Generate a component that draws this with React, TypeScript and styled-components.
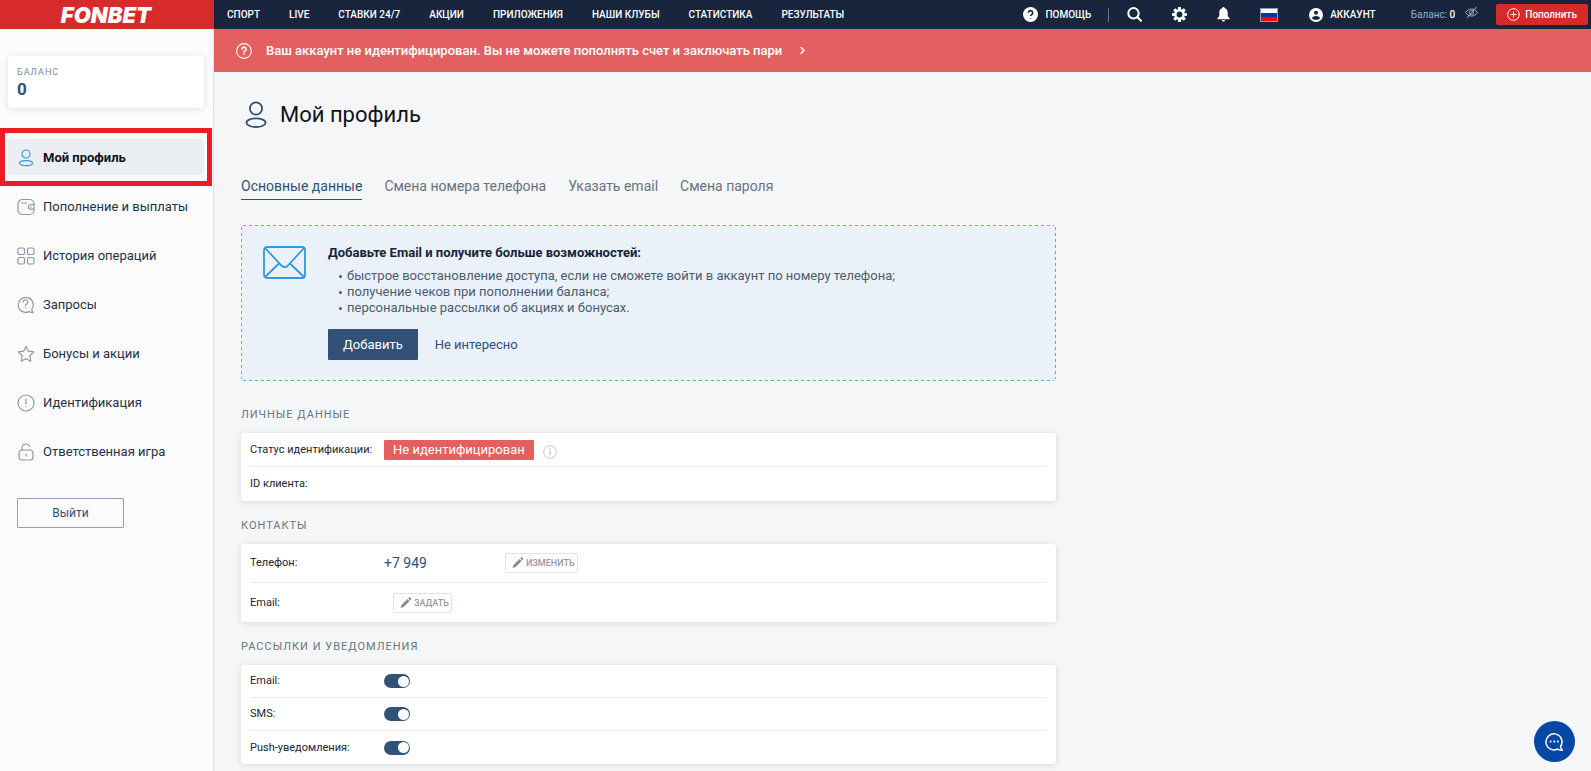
import React from 'react';
import styled, { createGlobalStyle } from 'styled-components';

const c = {
  navy: '#18253d',
  red: '#d62b2a',
  coral: '#e45f60',
  blue: '#315177',
  sky: '#2f9bdb',
  grey: '#8f99a6',
};

const GlobalStyle = createGlobalStyle`
  *, *::before, *::after { box-sizing: border-box; }
  body { margin: 0; background: #f5f6f8; color: #141a24; font-family: Roboto, "Liberation Sans", sans-serif; font-size: 13px; line-height: 16px; }
  button, input { font: inherit; }
  button { cursor: pointer; }
  a { color: inherit; text-decoration: none; }
  h1, h2, h3, p, ul { margin: 0; padding: 0; }
  ul { list-style: none; }
  svg { display: block; flex: none; }
`;

const Page = styled.div`
  display: grid;
  grid-template-columns: 214px minmax(0, 1fr);
  grid-template-rows: 29px 1fr;
  min-height: 100vh;
`;

const Logo = styled.a`
  display: flex;
  align-items: center;
  justify-content: center;
  padding-right: 2px;
  background: ${c.red};
  color: #fff;
  font-family: Inter, sans-serif;
  font-size: 22px;
  font-weight: 900;
  font-style: italic;
`;

const TopBar = styled.header`
  display: flex;
  align-items: center;
  justify-content: space-between;
  padding: 0 3px 0 13px;
  background: ${c.navy};
  color: #fff;
  font-size: 10px;
  font-weight: 500;
  white-space: nowrap;
`;

const TopNav = styled.nav`
  display: flex;
  gap: 29px;
`;

const Tools = styled.div`
  display: flex;
  align-items: center;
`;

const Tool = styled.button<{ $gap: number }>`
  display: flex;
  align-items: center;
  gap: 7px;
  margin-right: ${(p) => p.$gap}px;
  padding: 0;
  border: 0;
  background: none;
  color: #fff;
`;

const Divider = styled.span`
  width: 1px;
  height: 14px;
  margin-right: 18px;
  background: #66748a;
`;

const BalanceNote = styled.span`
  margin-right: 10px;
  color: #93b0cd;
  font-weight: 400;
  b { color: #fff; font-weight: 500; }
`;

const TopUp = styled.button`
  display: flex;
  align-items: center;
  gap: 5px;
  height: 21px;
  padding: 0 11px;
  border: 0;
  border-radius: 2px;
  background: ${c.red};
  color: #fff;
`;

const Sidebar = styled.aside`
  padding: 27px 9px 20px 8px;
  border-right: 1px solid #dfe2e6;
  background: #fbfbfb;
`;

const BalanceCard = styled.section`
  height: 52px;
  margin-bottom: 31px;
  padding: 10px 9px;
  border-radius: 3px;
  background: #fff;
  box-shadow: 0 1px 6px rgba(30, 45, 70, 0.12);
`;

const BalanceLabel = styled.h2`
  color: #7f8a98;
  font-size: 9px;
  line-height: 13px;
  font-weight: 400;
  letter-spacing: 1px;
`;

const BalanceValue = styled.p`
  color: ${c.blue};
  font-size: 17px;
  line-height: 20px;
  font-weight: 700;
`;

const MenuList = styled.ul`
  display: grid;
  gap: 13px;
`;

const MenuItem = styled.li<{ $active?: boolean }>`
  position: relative;
  border-radius: 3px;
  background: ${(p) => (p.$active ? '#ebeff4' : 'none')};
  color: ${(p) => (p.$active ? '#101216' : '#23324a')};
  font-weight: ${(p) => (p.$active ? 700 : 400)};
  a { display: flex; align-items: center; gap: 8px; height: 36px; padding: 2px 0 0 9px; white-space: nowrap; }
  svg { color: ${(p) => (p.$active ? c.sky : c.grey)}; }
`;

const Highlight = styled.span`
  position: absolute;
  inset: -11px -8px;
  border: 5px solid #ed1c24;
  pointer-events: none;
`;

const Logout = styled.button`
  width: 107px;
  height: 30px;
  margin: 29px 0 0 9px;
  border: 1px solid #91a0b6;
  border-radius: 1px;
  background: none;
  color: ${c.blue};
  font-size: 12px;
`;

const Main = styled.main`
  min-width: 0;
`;

const Alert = styled.a`
  display: flex;
  align-items: center;
  gap: 14px;
  height: 43px;
  padding-left: 22px;
  background: ${c.coral};
  color: #fff;
  font-weight: 500;
`;

const Content = styled.div`
  max-width: 842px;
  padding: 27px 0 6px 27px;
`;

const Title = styled.h1`
  display: flex;
  align-items: center;
  gap: 13px;
  height: 32px;
  padding-left: 4px;
  color: #101216;
  font-size: 22px;
  font-weight: 400;
  svg { color: ${c.blue}; }
`;

const Tabs = styled.nav`
  display: flex;
  gap: 22px;
  margin: 45px 0 25px;
`;

const Tab = styled.a<{ $active?: boolean }>`
  height: 24px;
  padding-top: 2px;
  border-bottom: 1px solid ${(p) => (p.$active ? c.blue : 'transparent')};
  color: ${(p) => (p.$active ? c.blue : '#69737f')};
  font-size: 14px;
`;

const dash = (dir: string) => `linear-gradient(to ${dir}, #5aaedb 3px, transparent 3px)`;

const Promo = styled.section`
  display: flex;
  align-items: flex-start;
  gap: 22px;
  height: 156px;
  padding: 20px 22px;
  border-radius: 4px;
  background:
    ${dash('right')} 2px 0 / 6px 1px repeat-x,
    ${dash('right')} 2px 100% / 6px 1px repeat-x,
    ${dash('bottom')} 0 2px / 1px 6px repeat-y,
    ${dash('bottom')} 100% 2px / 1px 6px repeat-y,
    #eaf1f8;
  > svg { margin-top: 1px; color: ${c.sky}; }
`;

const PromoTitle = styled.h2`
  margin-bottom: 7px;
  color: #16243a;
  font-size: 13px;
  line-height: 16px;
  font-weight: 700;
`;

const PromoItem = styled.li`
  display: flex;
  align-items: center;
  gap: 5px;
  padding-left: 11px;
  color: #4b5b70;
  &::before { content: ''; width: 3px; height: 3px; border-radius: 50%; background: currentColor; }
`;

const Actions = styled.div`
  display: flex;
  margin-top: 13px;
`;

const Action = styled.button<{ $primary?: boolean }>`
  height: 31px;
  padding: 0 ${(p) => (p.$primary ? 15 : 17)}px;
  border: 0;
  border-radius: 1px;
  background: ${(p) => (p.$primary ? c.blue : 'none')};
  color: ${(p) => (p.$primary ? '#fff' : c.blue)};
`;

const SectionTitle = styled.h2`
  margin: 17px 0 10px;
  color: #687584;
  font-size: 11px;
  line-height: 16px;
  font-weight: 400;
  letter-spacing: 1px;
`;

const PersonalTitle = styled(SectionTitle)`
  margin-top: 26px;
`;

const Card = styled.section<{ $row: number }>`
  display: grid;
  grid-auto-rows: ${(p) => p.$row}px;
  padding: 0 9px;
  border-radius: 3px;
  background: #fff;
  box-shadow: 0 1px 6px rgba(30, 45, 70, 0.14);
`;

const Row = styled.div`
  display: grid;
  grid-template-columns: 134px 1fr;
  align-items: center;
  color: #20252c;
  &:not(:last-child) { border-bottom: 1px solid #ebedef; }
`;

const RowLabel = styled.label`
  font-size: 11px;
`;

const RowValue = styled.div`
  display: flex;
  align-items: center;
`;

const Status = styled.span`
  margin-right: 9px;
  padding: 2px 9px;
  border-radius: 1px;
  background: ${c.coral};
  color: #fff;
`;

const Phone = styled.span`
  width: 121px;
  color: ${c.blue};
  font-size: 14px;
`;

const Edit = styled.button<{ $indent?: boolean }>`
  display: flex;
  align-items: center;
  gap: 2px;
  height: 20px;
  margin-left: ${(p) => (p.$indent ? 9 : 0)}px;
  padding: 0 2px 0 6px;
  border: 1px solid #e2e3e5;
  border-radius: 2px;
  background: #fff;
  color: #999;
  font-size: 9px;
  font-weight: 500;
`;

const Switch = styled.input`
  appearance: none;
  display: flex;
  align-items: center;
  width: 26px;
  height: 14px;
  margin: 0;
  padding: 1px;
  border-radius: 7px;
  background: #aab4c1;
  &::before { content: ''; width: 11px; height: 11px; border-radius: 50%; background: #fff; }
  &:checked { justify-content: flex-end; background: ${c.blue}; }
`;

const Chat = styled.button`
  position: fixed;
  right: 16px;
  bottom: 9px;
  display: grid;
  place-items: center;
  width: 41px;
  height: 41px;
  padding: 0;
  border: 0;
  border-radius: 50%;
  background: #0547a5;
  color: #fff;
`;

type IconProps = { size?: number; box?: number; sw?: number; children: React.ReactNode };
const Icon = ({ size = 18, box = 18, sw = 1.2, children }: IconProps) => (
  <svg width={size} height={size} viewBox={`0 0 ${box} ${box}`} fill="none" stroke="currentColor" strokeWidth={sw} strokeLinecap="round" strokeLinejoin="round" aria-hidden="true">
    {children}
  </svg>
);

const QuestionMark = () => (
  <>
    <path d="M6.7 7a2.3 2.3 0 1 1 3.4 2c-.8.4-1.1.8-1.1 1.5" />
    <path d="M9 12.5v.1" />
  </>
);

const menu = [
  {
    text: 'Мой профиль',
    active: true,
    icon: (
      <Icon>
        <circle cx="9" cy="5" r="4" />
        <ellipse cx="9" cy="14.2" rx="6.5" ry="2.5" />
      </Icon>
    ),
  },
  {
    text: 'Пополнение и выплаты',
    icon: (
      <Icon>
        <rect x="1" y="1.5" width="16" height="15" rx="4.5" />
        <path d="M4.5 5h5M17 6.5h-3.3a2.3 2.3 0 0 0 0 4.6H17M13.6 8.8h.6" />
      </Icon>
    ),
  },
  {
    text: 'История операций',
    icon: (
      <Icon>
        <rect x="1" y="1" width="6.5" height="6.5" rx="1.6" />
        <rect x="10.5" y="1" width="6.5" height="6.5" rx="1.6" />
        <rect x="1" y="10.5" width="6.5" height="6.5" rx="1.6" />
        <rect x="10.5" y="10.5" width="6.5" height="6.5" rx="1.6" />
      </Icon>
    ),
  },
  {
    text: 'Запросы',
    icon: (
      <Icon>
        <path d="M14.7 13.4A7.5 7.5 0 1 0 12 15.6c1.2.8 2.7 1.2 4.3 1-.9-.8-1.4-1.8-1.6-3.2Z" />
        <g transform="translate(-.6 -.9)"><QuestionMark /></g>
      </Icon>
    ),
  },
  {
    text: 'Бонусы и акции',
    icon: (
      <Icon>
        <path d="m9 1.300 2.300 4.900 5.400.7-3.900 3.800.9 5.500L9 13.600l-4.700 2.600.9-5.500-3.900-3.800 5.400-.7Z" />
      </Icon>
    ),
  },
  {
    text: 'Идентификация',
    icon: (
      <Icon>
        <circle cx="9" cy="9" r="8" />
        <path d="M9 5v4.800M9 12.500v.2" />
      </Icon>
    ),
  },
  {
    text: 'Ответственная игра',
    icon: (
      <Icon>
        <rect x="2" y="7" width="14" height="10" rx="3" />
        <path d="M5 7V5.200C5 2.800 6.700 1 9 1c1.700 0 3.100.9 3.700 2.300M9 11v2" />
      </Icon>
    ),
  },
];

const Pencil = () => (
  <svg width="12" height="12" viewBox="0 0 12 12" fill="#888" aria-hidden="true">
    <path d="M.6 11l.9-3 6-6 2.100 2.100-6 6ZM8.200 1.300l.7-.7c.4-.4.8-.4 1.200 0l.9.9c.4.4.4.800 0 1.200l-.7.700Z" />
  </svg>
);

const teeth = [0, 45, 90, 135, 180, 225, 270, 315];

const App = () => (
  <>
    <GlobalStyle />
    <Page>
      <Logo href="#">FONBET</Logo>
      <TopBar>
        <TopNav>
          {['СПОРТ', 'LIVE', 'СТАВКИ 24/7', 'АКЦИИ', 'ПРИЛОЖЕНИЯ', 'НАШИ КЛУБЫ', 'СТАТИСТИКА', 'РЕЗУЛЬТАТЫ'].map((t) => (
            <a href="#" key={t}>{t}</a>
          ))}
        </TopNav>
        <Tools>
          <Tool $gap={17}>
            <svg width="15" height="15" viewBox="0 0 15 15" aria-hidden="true">
              <circle cx="7.500" cy="7.500" r="7.500" fill="#fff" />
              <path d="M5.300 5.800a2.200 2.200 0 1 1 3.300 1.900c-.8.400-1.100.7-1.100 1.400M7.500 11v.5" fill="none" stroke={c.navy} strokeWidth="1.600" />
            </svg>
            ПОМОЩЬ
          </Tool>
          <Divider />
          <Tool $gap={30} aria-label="Поиск">
            <Icon size={15} box={15} sw={2}><circle cx="6.500" cy="6.300" r="5.200" /><path d="m10.500 10.300 3.500 3.500" /></Icon>
          </Tool>
          <Tool $gap={30} aria-label="Настройки">
            <svg width="15" height="15" viewBox="0 0 15 15" aria-hidden="true">
              {teeth.map((a) => <rect key={a} x="5.900" y="0" width="3.200" height="4" rx=".8" fill="#fff" transform={`rotate(${a} 7.5 7.5)`} />)}
              <circle cx="7.500" cy="7.500" r="4.100" fill="none" stroke="#fff" strokeWidth="2.400" />
            </svg>
          </Tool>
          <Tool $gap={30} aria-label="Уведомления">
            <svg width="13" height="15" viewBox="0 0 13 15" fill="#fff" aria-hidden="true">
              <path d="M6.500 0c.7 0 1.100.5 1.100 1.100C9.600 1.700 10.700 3.400 10.700 5.500V9l2 2.500v.8H.3v-.8L2.300 9V5.500c0-2.100 1.100-3.800 3.100-4.400C5.400.5 5.800 0 6.500 0ZM5 13h3c0 1-.6 1.600-1.500 1.600S5 14 5 13Z" />
            </svg>
          </Tool>
          <Tool $gap={31} aria-label="Язык">
            <svg width="18" height="14" viewBox="0 0 18 14" aria-hidden="true">
              <path fill="#fff" d="M0 0h18v5H0z" /><path fill="#0039a6" d="M0 5h18v4H0z" /><path fill="#f00" d="M0 9h18v5H0z" />
              <rect x=".5" y=".5" width="17" height="13" fill="none" stroke="#8a9bbb" />
            </svg>
          </Tool>
          <Tool $gap={35}>
            <svg width="14" height="14" viewBox="0 0 14 14" aria-hidden="true">
              <circle cx="7" cy="7" r="7" fill="#fff" />
              <circle cx="7" cy="4.800" r="2" fill={c.navy} />
              <path d="M3 10.300C3.300 8.700 4.900 8 7 8s3.700.7 4 2.300C10.200 11.300 8.800 11.900 7 11.900s-3.200-.6-4-1.600Z" fill={c.navy} />
            </svg>
            АККАУНТ
          </Tool>
          <BalanceNote>Баланс: <b>0</b></BalanceNote>
          <Tool $gap={18} aria-label="Скрыть баланс">
            <svg width="13" height="15" viewBox="0 0 13 15" fill="none" stroke="#a1b4c8" aria-hidden="true">
              <path d="M.5 5.500C2 3.200 4 2 6.500 2s4.500 1.200 6 3.500C11 7.800 9 9 6.500 9S2 7.800.5 5.500ZM2 11 11.500 0" /><circle cx="6.500" cy="5.500" r="2" />
            </svg>
          </Tool>
          <TopUp>
            <Icon size={13} box={13} sw={1}><circle cx="6.500" cy="6.500" r="5.800" /><path d="M6.500 4v5M4 6.500h5" /></Icon>
            Пополнить
          </TopUp>
        </Tools>
      </TopBar>

      <Sidebar>
        <BalanceCard>
          <BalanceLabel>БАЛАНС</BalanceLabel>
          <BalanceValue>0</BalanceValue>
        </BalanceCard>
        <nav>
          <MenuList>
            {menu.map((m) => (
              <MenuItem key={m.text} $active={m.active}>
                <a href="#">{m.icon}{m.text}</a>
                {m.active && <Highlight />}
              </MenuItem>
            ))}
          </MenuList>
        </nav>
        <Logout>Выйти</Logout>
      </Sidebar>

      <Main>
        <Alert href="#">
          <Icon size={16}>
            <circle cx="9" cy="9" r="8.300" />
            <g strokeWidth="1.800"><QuestionMark /></g>
          </Icon>
          Ваш аккаунт не идентифицирован. Вы не можете пополнять счет и заключать пари
          <Icon size={9} box={9} sw={1.5}><path d="M5 1.500 8 4.500 5 7.500" /></Icon>
        </Alert>
        <Content>
          <Title>
            <svg width="22" height="28" viewBox="0 0 22 28" fill="none" stroke="currentColor" strokeWidth="1.800" aria-hidden="true">
              <circle cx="11" cy="7.500" r="6.100" />
              <ellipse cx="11" cy="21.700" rx="9.500" ry="4.300" />
            </svg>
            Мой профиль
          </Title>
          <Tabs>
            <Tab href="#" $active>Основные данные</Tab>
            <Tab href="#">Смена номера телефона</Tab>
            <Tab href="#">Указать email</Tab>
            <Tab href="#">Смена пароля</Tab>
          </Tabs>

          <Promo>
            <svg width="43" height="33" viewBox="0 0 43 33" fill="none" stroke="currentColor" strokeWidth="1.800" aria-hidden="true">
              <rect x="1" y="1" width="41" height="31" rx="3" />
              <path d="M2 2 18.500 19.500c2 2 4.500 2 6.500 0L41 2M2 31 16 17.500M41 31 27 17.500" />
            </svg>
            <div>
              <PromoTitle>Добавьте Email и получите больше возможностей:</PromoTitle>
              <ul>
                <PromoItem>быстрое восстановление доступа, если не сможете войти в аккаунт по номеру телефона;</PromoItem>
                <PromoItem>получение чеков при пополнении баланса;</PromoItem>
                <PromoItem>персональные рассылки об акциях и бонусах.</PromoItem>
              </ul>
              <Actions>
                <Action $primary>Добавить</Action>
                <Action>Не интересно</Action>
              </Actions>
            </div>
          </Promo>

          <PersonalTitle>ЛИЧНЫЕ ДАННЫЕ</PersonalTitle>
          <Card $row={34}>
            <Row>
              <RowLabel as="span">Статус идентификации:</RowLabel>
              <RowValue>
                <Status>Не идентифицирован</Status>
                <svg width="14" height="18" viewBox="0 0 14 18" fill="none" stroke="#c5c5c8" aria-hidden="true">
                  <circle cx="7" cy="11" r="6.300" /><path strokeWidth="1.400" d="M7 9.800v4.200M7 7.500v1.200" />
                </svg>
              </RowValue>
            </Row>
            <Row><RowLabel as="span">ID клиента:</RowLabel></Row>
          </Card>

          <SectionTitle>КОНТАКТЫ</SectionTitle>
          <Card $row={39}>
            <Row>
              <RowLabel as="span">Телефон:</RowLabel>
              <RowValue><Phone>+7 949</Phone><Edit><Pencil />ИЗМЕНИТЬ</Edit></RowValue>
            </Row>
            <Row>
              <RowLabel as="span">Email:</RowLabel>
              <RowValue><Edit $indent><Pencil />ЗАДАТЬ</Edit></RowValue>
            </Row>
          </Card>

          <SectionTitle>РАССЫЛКИ И УВЕДОМЛЕНИЯ</SectionTitle>
          <Card $row={33}>
            {[['email', 'Email:'], ['sms', 'SMS:'], ['push', 'Push-уведомления:']].map(([id, label]) => (
              <Row key={id}>
                <RowLabel htmlFor={id}>{label}</RowLabel>
                <Switch id={id} type="checkbox" defaultChecked />
              </Row>
            ))}
          </Card>
        </Content>
      </Main>
    </Page>
    <Chat aria-label="Чат">
      <Icon size={20} box={20} sw={1.5}>
        <path d="M15.500 14.500A8 8 0 1 0 12.600 17c1.300.9 3 1.300 4.800 1.100-1-.9-1.700-2.100-1.900-3.600Z" />
        <path d="M5.600 9.500h.1M9.200 9.500h.1M12.800 9.500h.1" strokeWidth="2" />
      </Icon>
    </Chat>
  </>
);

export default App;
